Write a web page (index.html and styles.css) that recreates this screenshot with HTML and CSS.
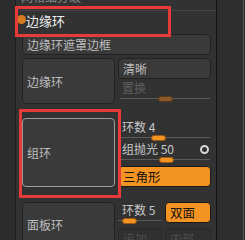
FILE: index.html
```html
<!DOCTYPE html>
<html lang="zh">
<head>
<meta charset="utf-8">
<link rel="stylesheet" href="styles.css">
</head>
<body>
<div class="app">
  <div class="gutter"></div>
  <div class="panel">
    <div class="cut"><span>网格细分级</span></div>
    <div class="header"><span class="dot"></span><span class="title">边缘环</span></div>
    <div class="content">
      <div class="btn">边缘环遮罩边框</div>
      <div class="row r2">
        <div class="btn big">边缘环</div>
        <div class="col">
          <div class="btn">清晰</div>
          <div class="label dim">置换</div>
          <div class="slider"><span class="thumb dull" style="left:38px"></span></div>
        </div>
      </div>
      <div class="row r3">
        <div class="btn big sel">组环</div>
        <div class="col c3">
          <div class="label">环数 4</div>
          <div class="slider"><span class="thumb" style="left:31px"></span></div>
          <div class="label lrow">组抛光 50<span class="ring"></span></div>
          <div class="slider"><span class="thumb" style="left:39px"></span></div>
          <div class="btn orange">三角形</div>
        </div>
      </div>
      <div class="row r4">
        <div class="btn big tall">面板环</div>
        <div class="grid4">
          <div class="mini">
            <div class="label">环数 5</div>
            <div class="slider"><span class="thumb" style="left:4px"></span></div>
          </div>
          <div class="btn orange">双面</div>
          <div class="btn off">追加</div>
          <div class="btn off">内部</div>
        </div>
      </div>
    </div>
  </div>
  <div class="side"></div>
</div>
<div class="mark m1"></div>
<div class="mark m2"></div>
</body>
</html>
```

FILE: styles.css
```css
* { box-sizing: border-box; }
html, body { margin: 0; padding: 0; }
body {
  width: 245px;
  height: 240px;
  overflow: hidden;
  background: #303030;
  font-family: "Noto Sans CJK SC", "Noto Sans", sans-serif;
  font-size: 12px;
  color: #c4c4c4;
  position: relative;
}
.app { display: flex; height: 240px; }
.gutter {
  width: 16px;
  background: #2c2c2c;
  border-right: 1px solid #1c1c1c;
  flex: none;
}
.panel {
  width: 200px;
  flex: none;
  background: #323232;
  position: relative;
}
.side {
  width: 29px;
  flex: none;
  background: #2e2e2e;
  border-left: 1px solid #121212;
  border-right: 1px solid #262626;
  box-shadow: inset -1px 0 0 #5c5c5c;
}
.cut { height: 10px; overflow: hidden; padding-left: 5px; color: #8a8a8a; }
.cut span { display: block; margin-top: -10px; line-height: 14px; }
.header {
  height: 24px;
  border-top: 1px solid #444;
  display: flex;
  align-items: flex-start;
  padding-top: 2px;
  position: relative;
}
.dot {
  position: absolute;
  left: 1px; top: 4px;
  width: 9px; height: 9px;
  border-radius: 50%;
  background: #d47b22;
}
.title { margin-left: 10px; font-size: 13px; line-height: 16px; color: #ececec; }
.content { padding: 0 5px 0 6px; }
.btn {
  height: 21px;
  background: #3a3a3a;
  border: 1px solid #222;
  border-radius: 4px;
  line-height: 19px;
  padding-left: 4px;
  color: #bdbdbd;
  white-space: nowrap;
}
.row { display: grid; grid-template-columns: 93px 93px; column-gap: 3px; }
.r2 { margin-top: 3px; }
.r3 { margin-top: 14px; }
.r4 { margin-top: 15px; }
.btn.big { height: 46px; display: flex; align-items: center; }
.btn.big.sel { height: 69px; border-color: #9c9c9c; }
.btn.big.tall { height: 44px; }
.col { display: flex; flex-direction: column; }
.label { height: 16px; line-height: 16px; padding-left: 4px; color: #c8c8c8; white-space: nowrap; }
.label.dim { color: #5e5e5e; height: 17px; line-height: 17px; }
.slider { height: 6px; position: relative; margin: 0 1px 0 2px; }
.slider::before {
  content: "";
  position: absolute;
  left: 0; right: 0; top: 2px;
  height: 1px;
  background: #5a5a5a;
}
.thumb {
  position: absolute;
  top: 0;
  width: 15px; height: 6px;
  border-radius: 3px;
  background: #f39322;
  border: 1px solid #9a5a14;
}
.thumb.dull { background: #8a5a2c; border-color: #5a3a1c; }
.c3 { padding-top: 1px; }
.lrow { position: relative; }
.ring {
  position: absolute;
  right: 2px; top: 4px;
  width: 9px; height: 9px;
  border-radius: 50%;
  border: 2px solid #d8d8d8;
}
.btn.orange {
  background: #f39322;
  border-color: #1a1a1a;
  color: #111;
  font-size: 12.5px;
}
.c3 .btn.orange { margin-top: 3px; }
.grid4 {
  display: grid;
  grid-template-columns: 44px 46px;
  column-gap: 3px;
  row-gap: 4px;
}
.mini .slider { margin: 0; }
.btn.off { background: #303030; border-color: #2a2a2a; color: #4e4e4e; }
.mark {
  position: absolute;
  border: 3px solid #e83a3a;
  pointer-events: none;
}
.m1 { left: 15px; top: 6px; width: 156px; height: 31px; }
.m2 { left: 19px; top: 109px; width: 102px; height: 89px; }
```
